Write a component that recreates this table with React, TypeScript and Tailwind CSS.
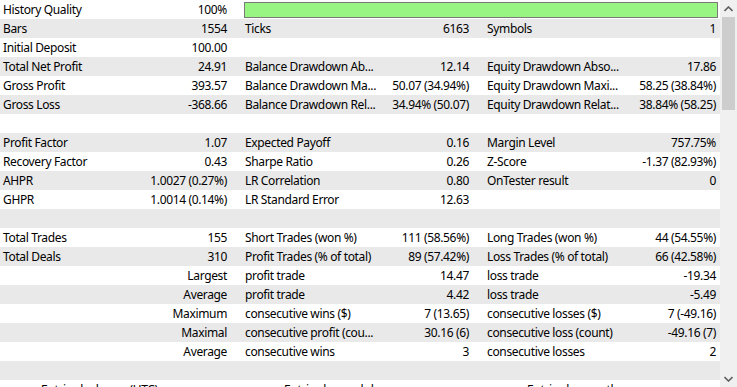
import React from "react";

type Row = {
  a?: string;
  b?: string;
  c?: string;
  d?: string;
  e?: string;
  f?: string;
  bar?: boolean;
};

const rows: Row[] = [
  { a: "History Quality", b: "100%", bar: true },
  { a: "Bars", b: "1554", c: "Ticks", d: "6163", e: "Symbols", f: "1" },
  { a: "Initial Deposit", b: "100.00" },
  { a: "Total Net Profit", b: "24.91", c: "Balance Drawdown Ab...", d: "12.14", e: "Equity Drawdown Abso...", f: "17.86" },
  { a: "Gross Profit", b: "393.57", c: "Balance Drawdown Ma...", d: "50.07 (34.94%)", e: "Equity Drawdown Maxi...", f: "58.25 (38.84%)" },
  { a: "Gross Loss", b: "-368.66", c: "Balance Drawdown Rel...", d: "34.94% (50.07)", e: "Equity Drawdown Relat...", f: "38.84% (58.25)" },
  {},
  { a: "Profit Factor", b: "1.07", c: "Expected Payoff", d: "0.16", e: "Margin Level", f: "757.75%" },
  { a: "Recovery Factor", b: "0.43", c: "Sharpe Ratio", d: "0.26", e: "Z-Score", f: "-1.37 (82.93%)" },
  { a: "AHPR", b: "1.0027 (0.27%)", c: "LR Correlation", d: "0.80", e: "OnTester result", f: "0" },
  { a: "GHPR", b: "1.0014 (0.14%)", c: "LR Standard Error", d: "12.63" },
  {},
  { a: "Total Trades", b: "155", c: "Short Trades (won %)", d: "111 (58.56%)", e: "Long Trades (won %)", f: "44 (54.55%)" },
  { a: "Total Deals", b: "310", c: "Profit Trades (% of total)", d: "89 (57.42%)", e: "Loss Trades (% of total)", f: "66 (42.58%)" },
  { b: "Largest", c: "profit trade", d: "14.47", e: "loss trade", f: "-19.34" },
  { b: "Average", c: "profit trade", d: "4.42", e: "loss trade", f: "-5.49" },
  { b: "Maximum", c: "consecutive wins ($)", d: "7 (13.65)", e: "consecutive losses ($)", f: "7 (-49.16)" },
  { b: "Maximal", c: "consecutive profit (cou...", d: "30.16 (6)", e: "consecutive loss (count)", f: "-49.16 (7)" },
  { b: "Average", c: "consecutive wins", d: "3", e: "consecutive losses", f: "2" },
  {},
];

function StatRow({ row, shaded }: { row: Row; shaded: boolean }) {
  return (
    <div className={`flex h-[19px] items-center whitespace-nowrap ${shaded ? "bg-[#e9e9e9]" : "bg-white"}`}>
      <div className="w-[121px] pl-[3px]">{row.a}</div>
      <div className="w-[120px] pr-[14px] text-right">{row.b}</div>
      {row.bar ? (
        <div className="ml-[3px] h-[16px] w-[474px] border border-[#7a7a7a] bg-[#99f582]" />
      ) : (
        <>
          <div className="w-[138px] pl-[4px]">{row.c}</div>
          <div className="w-[104px] pr-[14px] text-right">{row.d}</div>
          <div className="w-[139px] pl-[4px]">{row.e}</div>
          <div className="w-[98px] pr-[4px] text-right">{row.f}</div>
        </>
      )}
    </div>
  );
}

function Scrollbar() {
  return (
    <div className="flex h-full w-[17px] flex-col bg-[#f0f0f0]">
      <div className="flex h-[17px] items-center justify-center">
        <svg width="9" height="6" viewBox="0 0 9 6">
          <path d="M0.5 5 L4.5 1 L8.5 5" fill="none" stroke="#606060" strokeWidth="1.6" />
        </svg>
      </div>
      <div className="mx-[2px] h-[93px] bg-[#cdcdcd]" />
      <div className="flex-1" />
      <div className="flex h-[17px] items-center justify-center">
        <svg width="9" height="6" viewBox="0 0 9 6">
          <path d="M0.5 1 L4.5 5 L8.5 1" fill="none" stroke="#606060" strokeWidth="1.6" />
        </svg>
      </div>
    </div>
  );
}

export default function App() {
  return (
    <div
      className="flex h-[387px] w-[737px] overflow-hidden bg-white text-[12px] tracking-[-0.35px] text-black"
      style={{ fontFamily: '"Noto Sans", "Open Sans", sans-serif' }}
    >
      <div className="w-[720px] overflow-hidden">
        {rows.map((row, i) => (
          <StatRow key={i} row={row} shaded={i % 2 === 1} />
        ))}
        <div className="flex h-[19px] items-end whitespace-nowrap bg-white">
          <div className="ml-[41px] w-[243px]">Entries by hours (UTC)</div>
          <div className="w-[243px]">Entries by weekdays</div>
          <div>Entries by months</div>
        </div>
      </div>
      <Scrollbar />
    </div>
  );
}
